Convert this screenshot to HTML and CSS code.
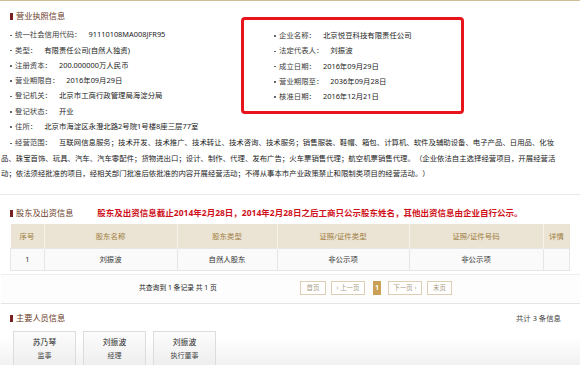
FILE: index.html
```html
<!DOCTYPE html>
<html lang="zh-cn">

<head>
    <meta charset="UTF-8">
    <title>企业信用信息</title>
    <link rel="stylesheet" href="styles.css">
</head>

<body>
    <div class="page">
        <div class="sec license">
            <div class="top">
                <div class="col">
                    <h3 class="tit">营业执照信息</h3>
                    <ul class="info">
                        <li><span class="k">统一社会信用代码：</span><span class="v">91110108MA008JFR95</span></li>
                        <li><span class="k">类型：</span><span class="v">有限责任公司(自然人独资)</span></li>
                        <li><span class="k">注册资本：</span><span class="v">200.000000万人民币</span></li>
                        <li><span class="k">营业期限自：</span><span class="v">2016年09月29日</span></li>
                        <li><span class="k">登记机关：</span><span class="v">北京市工商行政管理局海淀分局</span></li>
                        <li><span class="k">登记状态：</span><span class="v">开业</span></li>
                        <li><span class="k">住所：</span><span class="v">北京市海淀区永澄北路2号院1号楼8座三层77室</span></li>
                    </ul>
                </div>
                <div class="mark">
                    <ul class="info">
                        <li><span class="k">企业名称：</span><span class="v">北京悦豆科技有限责任公司</span></li>
                        <li><span class="k">法定代表人：</span><span class="v">刘振波</span></li>
                        <li><span class="k">成立日期：</span><span class="v">2016年09月29日</span></li>
                        <li><span class="k">营业期限至：</span><span class="v">2036年09月28日</span></li>
                        <li><span class="k">核准日期：</span><span class="v">2016年12月21日</span></li>
                    </ul>
                </div>
            </div>
            <p class="scope"><span class="k">经营范围：</span>互联网信息服务；技术开发、技术推广、技术转让、技术咨询、技术服务；销售服装、鞋帽、箱包、计算机、软件及辅助设备、电子产品、日用品、化妆品、珠宝首饰、玩具、汽车、汽车零配件；货物进出口；设计、制作、代理、发布广告；火车票销售代理；航空机票销售代理。（企业依法自主选择经营项目，开展经营活动；依法须经批准的项目，经相关部门批准后依批准的内容开展经营活动；不得从事本市产业政策禁止和限制类项目的经营活动。）</p>
        </div>

        <div class="sec holder">
            <div class="head">
                <h3 class="tit">股东及出资信息</h3>
                <span class="notice">股东及出资信息截止2014年2月28日，2014年2月28日之后工商只公示股东姓名，其他出资信息由企业自行公示。</span>
            </div>
            <table class="tb">
                <tr>
                    <th class="c1">序号</th>
                    <th class="c2">股东名称</th>
                    <th class="c3">股东类型</th>
                    <th class="c4">证照/证件类型</th>
                    <th class="c5">证照/证件号码</th>
                    <th class="c6">详情</th>
                </tr>
                <tr>
                    <td>1</td>
                    <td>刘振波</td>
                    <td>自然人股东</td>
                    <td>非公示项</td>
                    <td>非公示项</td>
                    <td></td>
                </tr>
            </table>
            <div class="pager">
                <span class="total">共查询到 1 条记录 共 1 页</span>
                <a class="first">首页</a>
                <a class="prev">‹ 上一页</a>
                <a class="cur">1</a>
                <a class="next">下一页 ›</a>
                <a class="last">末页</a>
            </div>
        </div>

        <div class="sec member">
            <div class="head">
                <h3 class="tit">主要人员信息</h3>
                <span class="count">共计 3 条信息</span>
            </div>
            <ul class="cards">
                <li><b>苏乃琴</b><span>监事</span></li>
                <li><b>刘振波</b><span>经理</span></li>
                <li><b>刘振波</b><span>执行董事</span></li>
            </ul>
        </div>
    </div>
</body>

</html>
```

FILE: styles.css
```css
body {
    margin: 0px;
    background: #fff;
    font: 7.4px/15.3px "Noto Sans", "Noto Sans CJK SC", sans-serif;
    color: #333;
    text-spacing-trim: space-all;
}

ul {
    margin: 0px;
    padding: 0px;
    list-style: none;
}

.page {
    border-top: 1px solid #cdbf98;
}

.sec {
    padding-left: 1px;
}

/* 标题 */
.tit {
    display: flex;
    align-items: center;
    margin: 0px;
    padding-left: 9px;
    font-size: 8.2px;
    line-height: 12px;
    font-weight: normal;
    color: #6a3a1e;
}

.tit::before {
    content: "";
    width: 2.5px;
    height: 7px;
    margin-right: 3.5px;
    background: #7a1f1f;
}

.head {
    display: flex;
    align-items: center;
}

/* 营业执照 */
.license {
    padding-bottom: 13px;
    border-bottom: 1px solid #e8e8e8;
}

.top {
    display: flex;
    align-items: flex-start;
}

.col {
    width: 240px;
    padding-top: 9px;
}

.col .info {
    margin-top: 5.3px;
    padding-left: 9px;
}

.info li::before,
.scope::before {
    content: "";
    display: inline-block;
    width: 1.6px;
    height: 1.6px;
    margin-right: 3.4px;
    background: #666;
    vertical-align: middle;
}

.k {
    color: #3c3c3c;
}

.v {
    margin-left: 7px;
    color: #222;
}

.mark {
    width: 187px;
    margin-top: 16px;
    padding: 8px 0px 7px 30px;
    border: 3px solid #e8131b;
    border-radius: 4px;
}

.scope {
    width: 558px;
    margin: 1px 0px 0px;
    text-indent: 9px;
    color: #222;
}

.scope .k {
    margin-right: 7px;
}

/* 股东 */
.holder .head {
    padding-top: 12px;
}

.notice {
    margin-left: 24px;
    font-size: 8.5px;
    line-height: 12px;
    font-weight: bold;
    color: #d0111b;
}

.tb {
    width: 560px;
    margin: 5px 0px 0px 9px;
    border-collapse: collapse;
    text-align: center;
}

.tb th {
    height: 24px;
    padding: 0px;
    background: #ebe3d3;
    border-left: 1px solid #f7f3eb;
    font-weight: normal;
    color: #9e7e42;
}

.tb th:first-child {
    border-left: none;
}

.tb td {
    height: 21px;
    padding: 0px;
    background: #fafafa;
    border: 1px solid #e6e6e6;
    color: #333;
}

.c1 { width: 33px; }
.c2 { width: 132px; }
.c3 { width: 99px; }
.c4 { width: 131px; }
.c5 { width: 133px; }

.pager {
    display: flex;
    align-items: center;
    margin-top: 3px;
    padding: 6px 0px 8px;
    border-top: 1px solid #eeeeee;
    border-bottom: 1px solid #e4e4e4;
    background: #fdfdfd;
}

.total {
    width: 161px;
    margin-left: 138px;
    font-size: 6.8px;
    line-height: 14px;
    color: #222;
}

.pager a {
    box-sizing: border-box;
    height: 14px;
    border: 1px solid #dccfb3;
    background: #fff;
    font-size: 6.4px;
    line-height: 12px;
    text-align: center;
    color: #a89c86;
    cursor: pointer;
}

.first { width: 26px; }
.prev { width: 34px; margin-left: 5px; }
.next { width: 34px; margin-left: 7px; }
.last { width: 25px; margin-left: 5px; }

.pager .cur {
    width: 8px;
    margin-left: 8px;
    border-color: #c9a055;
    background: #c9a055;
    font-weight: bold;
    color: #fff;
}

/* 主要人员 */
.member {
    height: 61px;
    overflow: hidden;
    background: linear-gradient(#fff 55%, #f1f1f1);
}

.member .head {
    padding-top: 8px;
}

.count {
    margin-left: auto;
    margin-right: 19px;
    line-height: 12px;
    color: #444;
}

.cards {
    display: flex;
    gap: 7px;
    margin: 7px 0px 0px 12px;
}

.cards li {
    box-sizing: border-box;
    width: 63px;
    height: 40px;
    padding-top: 3px;
    border: 1px solid #dcdcdc;
    background: linear-gradient(#fcfcfc, #ececec);
    text-align: center;
    line-height: 14px;
}

.cards b {
    display: block;
    font-size: 7.8px;
    font-weight: normal;
    color: #222;
}

.cards span {
    display: block;
    font-size: 7px;
    color: #444;
}
```
